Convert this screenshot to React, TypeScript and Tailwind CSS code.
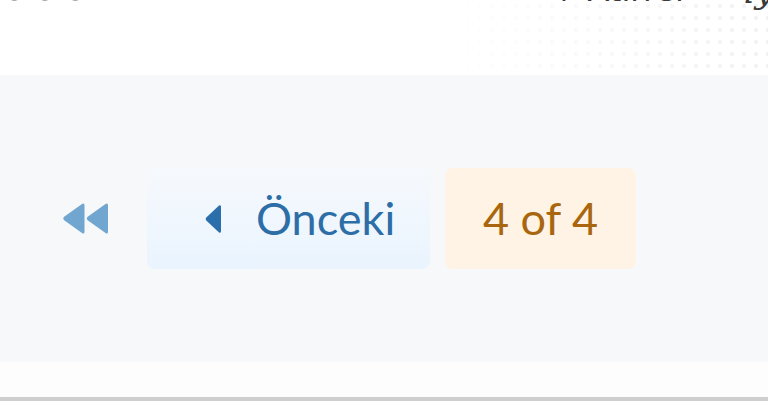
export default function App() {
	return (
		<div className="flex h-[401px] w-[768px] flex-col overflow-hidden bg-white font-['Lato',sans-serif]">
			<header className="relative h-[75px] shrink-0 overflow-hidden bg-white">
				<div className="absolute top-0 right-0 h-full w-[330px] bg-[radial-gradient(circle,#e6e9ed_1.8px,transparent_2.4px)] bg-[length:12px_12px] opacity-60 [mask-image:linear-gradient(to_left,black,transparent)]" />
				<div className="relative flex h-full items-start justify-between">
					<span className="-mt-[34px] ml-[2px] font-['DejaVu_Sans',sans-serif] text-[40px] leading-none tracking-[6px] text-[#444]">
						ooo
					</span>
					<div className="-mt-[26px] flex items-start gap-[60px]">
						<span className="font-['DejaVu_Sans',sans-serif] text-[32px] leading-none text-[#3a3a3a]">
							↑ Atirrel
						</span>
						<span className="-mr-[6px] font-['DejaVu_Serif',serif] text-[34px] italic leading-none text-[#3a3a3a]">
							ly
						</span>
					</div>
				</div>
			</header>

			<main className="flex h-[287px] shrink-0 items-center bg-[#f7f8fa] pl-[62px]">
				<div className="flex items-center">
					<svg className="shrink-0" width="46" height="33" viewBox="0 0 46 33" aria-hidden="true">
						<path
							d="M20 2 Q22.5 0.5 22.5 3.5 V29.5 Q22.5 32.5 20 31 L2.5 18.5 Q0 16.5 2.5 14.5 Z"
							fill="#71a6d1"
						/>
						<path
							d="M43.5 2 Q46 0.5 46 3.5 V29.5 Q46 32.5 43.5 31 L26 18.5 Q23.5 16.5 26 14.5 Z"
							fill="#71a6d1"
						/>
					</svg>
					<button
						type="button"
						className="ml-[39px] flex h-[101px] w-[283px] shrink-0 items-center rounded-[8px] bg-gradient-to-b from-[#f6f9fd] to-[#eaf4fe] pl-[58px] text-[#2c6ea5]"
					>
						<svg className="shrink-0" width="16" height="30" viewBox="0 0 16 30" aria-hidden="true">
							<path d="M14 1.5 Q16 0.5 16 3 V27 Q16 29.5 14 28.5 L1.3 16.5 Q0 15 1.3 13.5 Z" fill="#2a6fab" />
						</svg>
						<span className="ml-[35px] text-[45px] leading-none">Önceki</span>
					</button>
					<div className="ml-[15px] flex h-[101px] w-[191px] shrink-0 items-center justify-center rounded-[8px] bg-[#fff3e5] text-[45px] leading-none text-[#a8660e]">
						4 of 4
					</div>
				</div>
			</main>

			<div className="h-[35px] shrink-0 bg-[#fdfdfd]" />
			<div className="h-[4px] shrink-0 bg-[#cfcfcf]" />
		</div>
	)
}
